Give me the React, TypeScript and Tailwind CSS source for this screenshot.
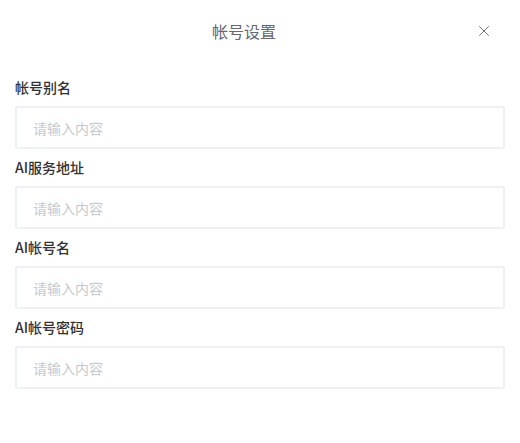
import { X } from 'lucide-react'

const fields = ['帐号别名', 'AI服务地址', 'AI帐号名', 'AI帐号密码']

export default function App() {
  return (
    <div
      className="w-[520px] h-[443px] bg-white"
      style={{ fontFamily: '"PingFang SC", "Noto Sans CJK SC", sans-serif' }}
    >
      {/* Header */}
      <div className="relative h-[62px] flex items-center justify-center pr-[32px]">
        <h2 className="text-[16px] text-[#656870] font-normal">帐号设置</h2>
        <button className="absolute right-[27px] top-[22px] text-[#707070]">
          <X size={18} strokeWidth={1.3} />
        </button>
      </div>

      {/* Form */}
      <div className="px-[15px] pt-[15px]">
        {fields.map((label, i) => (
          <div key={label} className={i > 0 ? 'mt-[8px]' : ''}>
            <label className="block h-[20px] leading-[20px] text-[14px] font-medium text-[#303133]">
              {label}
            </label>
            <input
              className="mt-[9px] w-full h-[43px] border-2 border-[#eef0f5] rounded-[2px] pl-[16px] text-[14px] text-[#303133] placeholder:text-[#c6c9d0] outline-none"
              placeholder="请输入内容"
            />
          </div>
        ))}
      </div>
    </div>
  )
}
